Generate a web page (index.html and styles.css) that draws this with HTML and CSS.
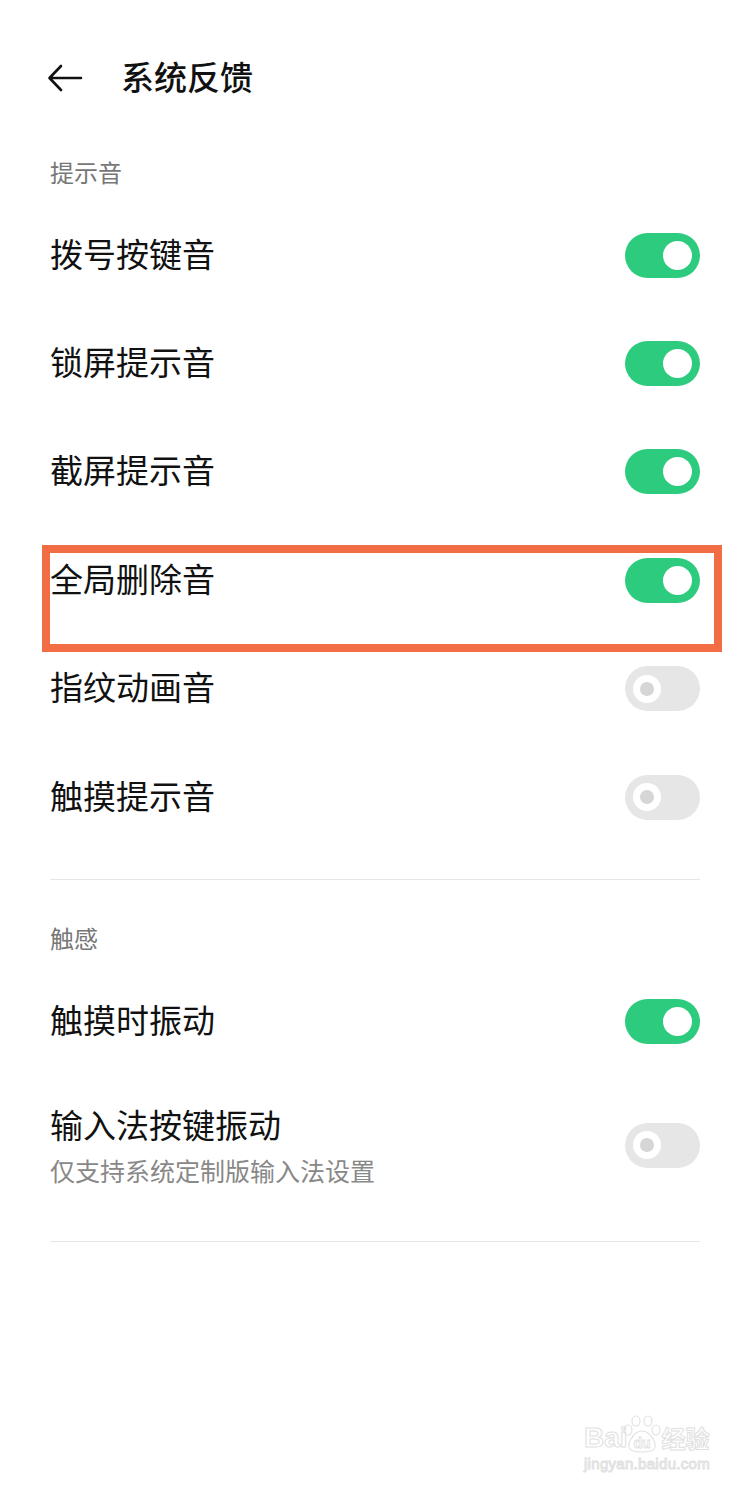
FILE: index.html
```html
<!DOCTYPE html>
<html lang="zh-CN">
<head>
  <meta charset="UTF-8">
  <meta name="viewport" content="width=device-width, initial-scale=1.0">
  <title>系统反馈</title>
  <link rel="stylesheet" href="styles.css">
</head>
<body>
  <div class="page">
    <div class="topbar">
      <svg class="back" width="36" height="28" viewBox="0 0 36 28">
        <path d="M34 14H3M14 2L2.5 14L14 26" fill="none" stroke="#111" stroke-width="2.6" stroke-linecap="round" stroke-linejoin="round"/>
      </svg>
      <h1>系统反馈</h1>
    </div>

    <!-- 提示音 -->
    <div class="group-title">提示音</div>
    <div class="row">
      <span class="label">拨号按键音</span>
      <span class="switch on"><span class="knob"></span></span>
    </div>
    <div class="row">
      <span class="label">锁屏提示音</span>
      <span class="switch on"><span class="knob"></span></span>
    </div>
    <div class="row">
      <span class="label">截屏提示音</span>
      <span class="switch on"><span class="knob"></span></span>
    </div>
    <div class="row marked">
      <span class="label">全局删除音</span>
      <span class="switch on"><span class="knob"></span></span>
      <div class="mark-box"></div>
    </div>
    <div class="row">
      <span class="label">指纹动画音</span>
      <span class="switch"><span class="knob"></span></span>
    </div>
    <div class="row">
      <span class="label">触摸提示音</span>
      <span class="switch"><span class="knob"></span></span>
    </div>
    <div class="divider"></div>

    <!-- 触感 -->
    <div class="group-title second">触感</div>
    <div class="row">
      <span class="label">触摸时振动</span>
      <span class="switch on"><span class="knob"></span></span>
    </div>
    <div class="row tall">
      <div class="text">
        <div class="label">输入法按键振动</div>
        <div class="sub">仅支持系统定制版输入法设置</div>
      </div>
      <span class="switch"><span class="knob"></span></span>
    </div>
    <div class="divider last"></div>

    <div class="watermark">
      <div class="wm-logo">
        <span>Bai</span>
        <svg class="paw" width="44" height="40" viewBox="0 0 44 40">
          <g fill="none" stroke="#e2e2e2" stroke-width="1.2">
            <ellipse cx="8" cy="16" rx="4" ry="5"/>
            <ellipse cx="16" cy="7" rx="4" ry="5"/>
            <ellipse cx="28" cy="7" rx="4" ry="5"/>
            <ellipse cx="36" cy="16" rx="4" ry="5"/>
            <path d="M22 17C14 17 6 30 10 35C13 39 31 39 34 35C38 30 30 17 22 17Z"/>
          </g>
          <text x="22" y="34" text-anchor="middle" class="paw-text">du</text>
        </svg>
        <span>经验</span>
      </div>
      <div class="wm-url">jingyan.baidu.com</div>
    </div>
  </div>
</body>
</html>
```

FILE: styles.css
```css
/* Global */
body {
  margin: 0;
  background-color: #ffffff;
  font-family: "Noto Sans CJK SC", "Noto Sans", sans-serif;
  color: #111;
}

.page {
  position: relative;
  width: 750px;
  height: 1494px;
  overflow: hidden;
}

/* Header */
.topbar {
  display: flex;
  align-items: center;
  height: 156px;
  padding-left: 47px;
}

.topbar .back {
  display: block;
}

.topbar h1 {
  margin: 0 0 4px 38px;
  font-size: 33px;
  font-weight: 500;
  line-height: 40px;
}

/* Group titles */
.group-title {
  padding: 0 50px;
  font-size: 24px;
  line-height: 32px;
  color: #777;
  margin-bottom: 13px;
}

.group-title.second {
  margin-top: 42px;
}

/* Rows */
.row {
  position: relative;
  display: flex;
  align-items: center;
  justify-content: space-between;
  height: 108.4px;
  padding: 0 50px;
  box-sizing: border-box;
}

.row .label {
  font-size: 33px;
  line-height: 40px;
}

.row > .label {
  margin-bottom: 5px;
}

.row.tall {
  height: auto;
  padding-top: 28px;
  padding-bottom: 28px;
}

.row .sub {
  margin-top: 9px;
  font-size: 25px;
  line-height: 34px;
  color: #888;
}

/* Switch */
.switch {
  position: relative;
  flex: none;
  width: 75px;
  height: 45px;
  border-radius: 23px;
  background-color: #e6e6e6;
}

.switch .knob {
  position: absolute;
  top: 8.5px;
  left: 8px;
  width: 14px;
  height: 14px;
  border: 7px solid #fff;
  border-radius: 50%;
  background-color: #d6d6d6;
}

.switch.on {
  background-color: #2dcb7e;
}

.switch.on .knob {
  top: 8px;
  left: auto;
  right: 8px;
  width: 29px;
  height: 29px;
  border: none;
  background-color: #fff;
}

/* Divider */
.divider {
  height: 1px;
  margin: 28px 50px 0;
  background-color: #e6e6e6;
}

.divider.last {
  margin-top: 26px;
}

/* Orange annotation box */
.mark-box {
  position: absolute;
  top: 19px;
  left: 42px;
  width: 680px;
  height: 107px;
  box-sizing: border-box;
  border: 8px solid #f26d43;
}

/* Watermark */
.watermark {
  position: absolute;
  right: 40px;
  bottom: 20px;
  color: #fff;
  font-family: "Liberation Sans", sans-serif;
  -webkit-text-stroke: 1px #e0e0e0;
}

.wm-logo {
  display: flex;
  align-items: flex-end;
  font-size: 28px;
  font-weight: bold;
  line-height: 32px;
}

.wm-logo .paw {
  margin: 0 -2px 0 -8px;
}

.wm-logo span:last-child {
  font-family: "Noto Sans CJK SC", sans-serif;
  font-size: 24px;
}

.paw-text {
  font-size: 14px;
  fill: #fff;
  stroke: #e0e0e0;
  stroke-width: 0.8;
}

.wm-url {
  font-size: 15px;
  line-height: 20px;
  letter-spacing: 0.3px;
}
```
